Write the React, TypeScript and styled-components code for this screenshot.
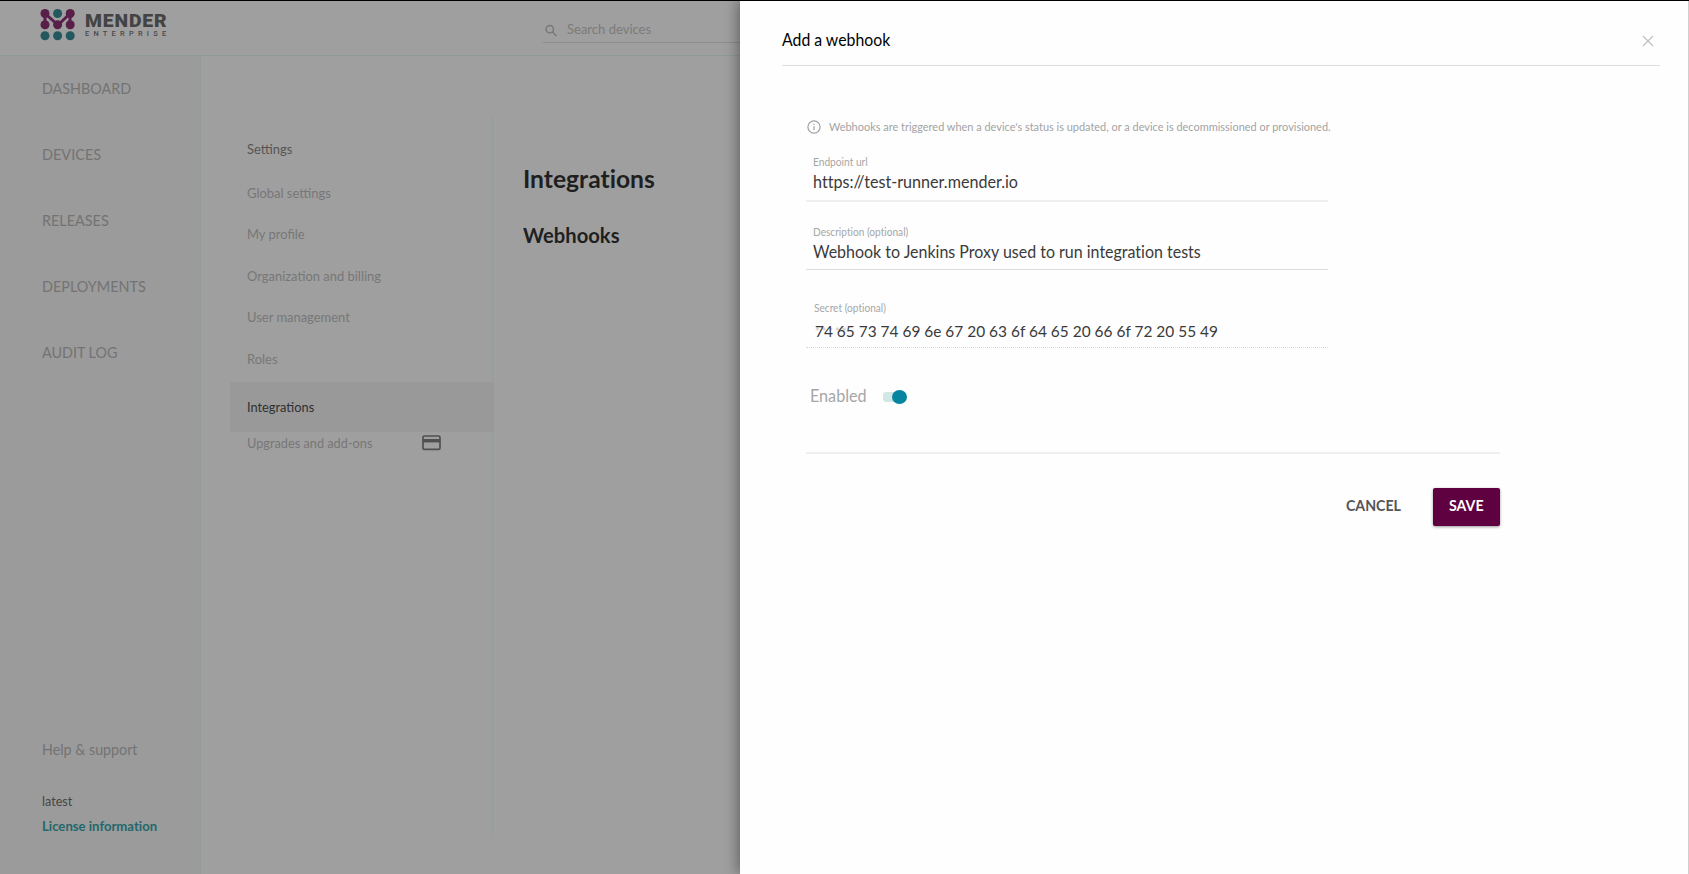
import React from 'react';
import styled, { createGlobalStyle, css } from 'styled-components';

const GlobalStyle = createGlobalStyle`
  * { box-sizing: border-box; }
  html, body { margin: 0; padding: 0; height: 874px; overflow: hidden; }
  body { font-family: Lato, 'Liberation Sans', sans-serif; background: #9f9f9f; }
`;

type FitProps = { $fit?: number };
const fit = css<FitProps>`
  display: inline-block;
  white-space: nowrap;
  transform-origin: left center;
  transform: ${(p) => (p.$fit ? `scaleX(${p.$fit})` : 'none')};
`;

const Screen = styled.div`
  position: relative;
  width: 1689px;
  height: 874px;
  overflow: hidden;
  border-top: 1px solid #000;
  display: flex;
  flex-direction: column;
`;

const Header = styled.header`
  height: 55px;
  flex: none;
  display: flex;
  border-bottom: 1px solid #909a99;
`;

const Brand = styled.div`
  width: 543px;
  display: flex;
  padding: 7px 0 0 40px;
`;

const Wordmark = styled.div`
  margin-left: 9px;
  padding-top: 3px;
  display: flex;
  flex-direction: column;
`;

const BrandName = styled.span<FitProps>`
  ${fit}
  font: 900 18px/19px Roboto, sans-serif;
  letter-spacing: 0.8px;
  color: #434343;
`;

const BrandEdition = styled.span<FitProps>`
  ${fit}
  font: 500 7px/9px Roboto, sans-serif;
  letter-spacing: 4px;
  color: #484848;
`;

const SearchBox = styled.div`
  width: 300px;
  height: 42px;
  display: flex;
  border-bottom: 1px solid #8d8d8d;
  padding: 18px 0 0 2px;
`;

const SearchHint = styled.span<FitProps>`
  ${fit}
  margin: -1px 0 0 10px;
  font-size: 14px;
  line-height: 22px;
  color: #7b7b7b;
`;

const Body = styled.div`
  flex: 1;
  display: flex;
`;

const Sidebar = styled.nav`
  width: 201px;
  padding-left: 42px;
  background: #9b9b9b;
  border-right: 1px solid #949b9b;
  display: flex;
  flex-direction: column;
  justify-content: space-between;
`;

const NavList = styled.div`
  display: flex;
  flex-direction: column;
`;

const NavRow = styled.div`
  height: 65.8px;
  display: flex;
  align-items: center;
  &:nth-child(-n + 2) {
    padding-bottom: 1.5px;
  }
`;

const NavText = styled.span<FitProps>`
  ${fit}
  font-size: 15px;
  line-height: 20px;
  color: #737373;
`;

const SidebarFooter = styled.div`
  display: flex;
  flex-direction: column;
  align-items: flex-start;
  height: 135px;
`;

const Version = styled.span<FitProps>`
  ${fit}
  margin-top: 32px;
  font-size: 13px;
  line-height: 20px;
  color: #454545;
`;

const License = styled.span<FitProps>`
  ${fit}
  margin-top: 5px;
  font-size: 13px;
  font-weight: 700;
  line-height: 20px;
  font-variant-ligatures: none;
  color: #24686c;
`;

const SettingsMenu = styled.aside`
  width: 292px;
  height: 719px;
  margin-top: 60px;
  border-right: 1px solid #959c9c;
  padding: 8px 0 0 29px;
`;

const MenuRow = styled.div<{ $h: number; $active?: boolean }>`
  height: ${(p) => p.$h}px;
  width: ${(p) => (p.$active ? 264 : 262)}px;
  margin-top: ${(p) => (p.$active ? 2 : 0)}px;
  padding-left: 17px;
  display: flex;
  align-items: center;
  background: ${(p) => (p.$active ? '#999999' : 'transparent')};
`;

const MenuText = styled.span<FitProps & { $tone?: string }>`
  ${fit}
  font-size: 13px;
  line-height: 20px;
  color: ${(p) => p.$tone || '#777777'};
`;

const CardIconSlot = styled.span`
  display: flex;
  margin-left: auto;
  margin-right: 51.5px;
`;

const Content = styled.main`
  padding: 107px 0 0 30px;
  display: flex;
  flex-direction: column;
  align-items: flex-start;
  font-variant-ligatures: none;
`;

const PageTitle = styled.h1<FitProps>`
  ${fit}
  margin: 0;
  font-size: 24px;
  line-height: 32px;
  color: #1f1f1f;
`;

const SectionTitle = styled.h2<FitProps>`
  ${fit}
  margin: 25px 0 0;
  font-size: 20px;
  line-height: 30px;
  color: #1f1f1f;
`;

const Drawer = styled.section`
  position: absolute;
  top: 0;
  right: 0;
  width: 949px;
  height: 873px;
  background: #fefefe;
  border-right: 1px solid #cfcfcf;
  box-shadow: -2px 0 13px rgba(0, 0, 0, 0.4);
  display: flex;
  flex-direction: column;
  font-variant-ligatures: none;
`;

const DrawerHeader = styled.div`
  height: 65px;
  flex: none;
  margin: 0 28px 0 42px;
  padding: 14px 6px 0 0;
  border-bottom: 1px solid #dedede;
  display: flex;
  justify-content: space-between;
`;

const DrawerTitle = styled.span<FitProps>`
  ${fit}
  font-size: 17px;
  line-height: 50px;
  height: 50px;
  color: #000;
`;

const CloseIcon = styled.svg`
  margin-top: 19.5px;
`;

const Form = styled.div`
  width: 694px;
  margin-left: 66px;
  padding-top: 51px;
  display: flex;
  flex-direction: column;
`;

const InfoRow = styled.div`
  height: 20px;
  display: flex;
  align-items: center;
  padding: 0 0 1px 1px;
`;

const InfoText = styled.span<FitProps>`
  ${fit}
  margin-left: 8px;
  font-size: 12px;
  color: #a3a3a3;
`;

const Field = styled.div<{ $top: number; $h: number; $line: string }>`
  width: 522px;
  margin-top: ${(p) => p.$top}px;
  height: ${(p) => p.$h}px;
  border-bottom: ${(p) => p.$line};
  padding-left: 7px;
  display: flex;
  flex-direction: column;
  align-items: flex-start;
`;

const FieldLabel = styled.label<FitProps & { $indent?: number }>`
  ${fit}
  margin-left: ${(p) => p.$indent || 0}px;
  font-size: 11px;
  line-height: 16px;
  color: #a6a6a6;
`;

const FieldValue = styled.span<FitProps & { $gap?: number; $size?: number }>`
  ${fit}
  position: relative;
  margin-top: ${(p) => p.$gap || 0}px;
  font-size: ${(p) => p.$size || 17}px;
  line-height: 24px;
  color: #3a3a3a;
`;

const SecretValue = styled.div`
  position: relative;
  padding-left: 2px;
`;

const SecretHint = styled.span`
  position: absolute;
  left: 2px;
  top: 9px;
  font-size: 11px;
  line-height: 14px;
  letter-spacing: 2px;
  color: #c6c6c6;
`;

const ToggleRow = styled.div`
  height: 24px;
  margin: 36px 0 0 4px;
  display: flex;
  align-items: center;
`;

const ToggleLabel = styled.span<FitProps>`
  ${fit}
  width: 73px;
  margin-bottom: 2px;
  font-size: 17px;
  color: #a6a6a6;
`;

const Switch = styled.span`
  width: 24px;
  height: 10px;
  margin-top: 2px;
  border-radius: 3px;
  background: linear-gradient(90deg, #d1e7e5 18px, transparent 18px);
  display: flex;
  align-items: center;
  justify-content: flex-end;
`;

const Thumb = styled.span`
  width: 15px;
  height: 14px;
  flex: none;
  border-radius: 50%;
  background: #05869e;
`;

const Divider = styled.div`
  height: 2px;
  margin-top: 44px;
  background: #efefef;
`;

const Actions = styled.div`
  display: flex;
  justify-content: flex-end;
  align-items: center;
  height: 38px;
  margin-top: 34px;
`;

const Button = styled.button<{ $primary?: boolean }>`
  width: ${(p) => (p.$primary ? 67 : 118)}px;
  height: 38px;
  padding: 0 0 4px ${(p) => (p.$primary ? 16 : 31)}px;
  border: 0;
  border-radius: 2px;
  text-align: left;
  font: 700 16px/20px Lato, sans-serif;
  color: ${(p) => (p.$primary ? '#fff' : '#555')};
  background: ${(p) => (p.$primary ? '#5f0040' : 'transparent')};
  box-shadow: ${(p) => (p.$primary ? '0 1px 3px rgba(0,0,0,.4)' : 'none')};
`;

const ButtonText = styled.span<FitProps>`
  ${fit}
`;

const navItems = [
  { label: 'DASHBOARD', fit: 0.955 },
  { label: 'DEVICES', fit: 0.965 },
  { label: 'RELEASES', fit: 0.96 },
  { label: 'DEPLOYMENTS', fit: 0.96 },
  { label: 'AUDIT LOG', fit: 0.955 },
];

const menuItems = [
  { label: 'Settings', h: 49, tone: '#555555' },
  { label: 'Global settings', h: 40 },
  { label: 'My profile', h: 41 },
  { label: 'Organization and billing', h: 43 },
  { label: 'User management', h: 40 },
  { label: 'Roles', h: 43 },
];

const LogoMark = () => (
  <svg width="36" height="34" viewBox="0 0 36 34">
    <path d="M5 5.5 18 17 30 5.5M5 5.5V16.5M30 5.5V16.5" stroke="#58204a" strokeWidth="3" fill="none" />
    <g fill="#581f49">
      <circle cx="5" cy="5.5" r="4.5" />
      <circle cx="30.2" cy="5.5" r="4.5" />
      <circle cx="5" cy="16.7" r="4.5" />
      <circle cx="17.6" cy="16.7" r="4.5" />
      <circle cx="30.2" cy="16.7" r="4.5" />
    </g>
    <g fill="#24585f">
      <circle cx="17.6" cy="5.5" r="4.5" />
      <circle cx="5" cy="27.7" r="4.5" />
      <circle cx="17.6" cy="27.7" r="4.5" />
      <circle cx="30.2" cy="27.7" r="4.5" />
    </g>
  </svg>
);

export default function App() {
  return (
    <>
      <GlobalStyle />
      <Screen>
        <Header>
          <Brand>
            <LogoMark />
            <Wordmark>
              <BrandName $fit={1.075}>MENDER</BrandName>
              <BrandEdition $fit={1.06}>ENTERPRISE</BrandEdition>
            </Wordmark>
          </Brand>
          <SearchBox>
            <svg width="12" height="20" viewBox="0 0 12 20" fill="none" stroke="#777" strokeWidth="1.4">
              <circle cx="4.8" cy="10.2" r="3.7" />
              <path d="M7.5 13 11.5 17" />
            </svg>
            <SearchHint $fit={0.93}>Search devices</SearchHint>
          </SearchBox>
        </Header>
        <Body>
          <Sidebar>
            <NavList>
              {navItems.map((item) => (
                <NavRow key={item.label}>
                  <NavText $fit={item.fit}>{item.label}</NavText>
                </NavRow>
              ))}
            </NavList>
            <SidebarFooter>
              <NavText $fit={0.95}>Help &amp; support</NavText>
              <Version $fit={0.97}>latest</Version>
              <License $fit={1.01}>License information</License>
            </SidebarFooter>
          </Sidebar>
          <SettingsMenu>
            {menuItems.map((item) => (
              <MenuRow key={item.label} $h={item.h}>
                <MenuText $tone={item.tone} $fit={0.995}>{item.label}</MenuText>
              </MenuRow>
            ))}
            <MenuRow $h={50} $active>
              <MenuText $tone="#303030" $fit={0.985}>Integrations</MenuText>
            </MenuRow>
            <MenuRow $h={22}>
              <MenuText $fit={0.98}>Upgrades and add-ons</MenuText>
              <CardIconSlot>
                <svg width="19" height="16" viewBox="0 0 19 16">
                  <rect x="1" y="1" width="17" height="13.4" rx="1.5" fill="none" stroke="#505050" strokeWidth="1.7" />
                  <path d="M1 4h17v3.4H1z" fill="#505050" />
                </svg>
              </CardIconSlot>
            </MenuRow>
          </SettingsMenu>
          <Content>
            <PageTitle $fit={1.027}>Integrations</PageTitle>
            <SectionTitle $fit={1.01}>Webhooks</SectionTitle>
          </Content>
        </Body>
        <Drawer>
          <DrawerHeader>
            <DrawerTitle $fit={0.93}>Add a webhook</DrawerTitle>
            <CloseIcon width="12" height="12" viewBox="0 0 12 12" stroke="#bdbdbd" strokeWidth="1.1">
              <path d="M1 1 11 11M11 1 1 11" />
            </CloseIcon>
          </DrawerHeader>
          <Form>
            <InfoRow>
              <svg width="14" height="14" viewBox="0 0 14 14" fill="none" stroke="#a0a0a0">
                <circle cx="7" cy="7" r="6.1" strokeWidth="1.2" />
                <path d="M7 6.2V10.2M7 3.7V5" strokeWidth="1.2" />
              </svg>
              <InfoText $fit={0.912}>
                Webhooks are triggered when a device's status is updated, or a device is decommissioned or provisioned.
              </InfoText>
            </InfoRow>
            <Field $top={17} $h={48} $line="2px solid #efefef">
              <FieldLabel $fit={0.925}>Endpoint url</FieldLabel>
              <FieldValue $fit={0.948}>https://test-runner.mender.io</FieldValue>
            </Field>
            <Field $top={22} $h={46} $line="1px solid #dddddd">
              <FieldLabel $fit={0.92}>Description (optional)</FieldLabel>
              <FieldValue $fit={0.94}>Webhook to Jenkins Proxy used to run integration tests</FieldValue>
            </Field>
            <Field $top={30} $h={48} $line="1px dotted #d8d8d8">
              <FieldLabel $fit={0.92} $indent={1}>Secret (optional)</FieldLabel>
              <SecretValue>
                <SecretHint>*****</SecretHint>
                <FieldValue $gap={3} $size={16} $fit={0.965}>
                  74 65 73 74 69 6e 67 20 63 6f 64 65 20 66 6f 72 20 55 49
                </FieldValue>
              </SecretValue>
            </Field>
            <ToggleRow>
              <ToggleLabel $fit={0.95}>Enabled</ToggleLabel>
              <Switch>
                <Thumb />
              </Switch>
            </ToggleRow>
            <Divider />
            <Actions>
              <Button>
                <ButtonText $fit={0.885}>CANCEL</ButtonText>
              </Button>
              <Button $primary>
                <ButtonText $fit={0.885}>SAVE</ButtonText>
              </Button>
            </Actions>
          </Form>
        </Drawer>
      </Screen>
    </>
  );
}
